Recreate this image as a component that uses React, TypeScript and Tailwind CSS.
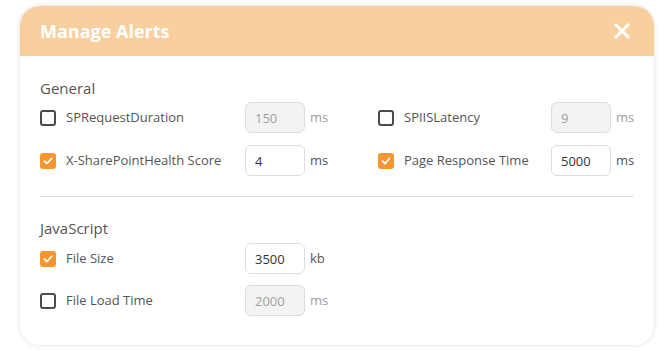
import { useState } from "react";

type Alert = {
  id: string;
  label: string;
  value: string;
  unit: string;
  checked: boolean;
};

const general: [Alert, Alert][] = [
  [
    { id: "spreq", label: "SPRequestDuration", value: "150", unit: "ms", checked: false },
    { id: "spiis", label: "SPIISLatency", value: "9", unit: "ms", checked: false },
  ],
  [
    { id: "health", label: "X-SharePointHealth Score", value: "4", unit: "ms", checked: true },
    { id: "page", label: "Page Response Time", value: "5000", unit: "ms", checked: true },
  ],
];

const javascript: Alert[] = [
  { id: "size", label: "File Size", value: "3500", unit: "kb", checked: true },
  { id: "load", label: "File Load Time", value: "2000", unit: "ms", checked: false },
];

function Check({ checked, onClick }: { checked: boolean; onClick: () => void }) {
  return (
    <button
      onClick={onClick}
      className={
        checked
          ? "w-4 h-4 shrink-0 rounded-[3px] bg-[#f7952f] flex items-center justify-center"
          : "w-4 h-4 shrink-0 rounded-[3px] border-2 border-[#4a4a4a] bg-white"
      }
    >
      {checked && (
        <svg width="10" height="10" viewBox="0 0 10 10">
          <path d="M1.5 5.2 L4 7.5 L8.5 2.5" stroke="#fff" strokeWidth="1.8" fill="none" strokeLinecap="round" strokeLinejoin="round" />
        </svg>
      )}
    </button>
  );
}

function Row({
  alert,
  labelWidth,
  onToggle,
}: {
  alert: Alert;
  labelWidth: string;
  onToggle: () => void;
}) {
  return (
    <div className="flex items-center h-[31px]">
      <Check checked={alert.checked} onClick={onToggle} />
      <span className={`ml-[10px] text-[13px] text-[#555] ${labelWidth}`}>{alert.label}</span>
      <input
        defaultValue={alert.value}
        disabled={!alert.checked}
        className={
          alert.checked
            ? "w-[60px] h-[31px] rounded-md border border-[#dcdcdc] bg-white px-[9px] text-[13px] text-[#333] outline-none"
            : "w-[60px] h-[31px] rounded-md border border-[#dcdcdc] bg-[#f3f3f3] px-[9px] text-[13px] text-[#a0a0a0] outline-none"
        }
      />
      <span className={alert.checked ? "ml-[5px] text-[13px] text-[#555]" : "ml-[5px] text-[13px] text-[#a0a0a0]"}>
        {alert.unit}
      </span>
    </div>
  );
}

export default function App() {
  const [state, setState] = useState<Record<string, boolean>>({});
  const isOn = (a: Alert) => (a.id in state ? state[a.id] : a.checked);
  const toggle = (a: Alert) => setState({ ...state, [a.id]: !isOn(a) });

  return (
    <div className="w-[668px] h-[351px] bg-white pt-[6px] pl-[20px]" style={{ fontFamily: '"Open Sans", "Noto Sans", sans-serif' }}>
      <div className="w-[634px] h-[339px] rounded-[20px] bg-white overflow-hidden shadow-[0_0_5px_rgba(0,0,0,0.13)]">
        <div className="h-[50px] bg-[#f9cf9e] flex items-center justify-between pl-5 pr-[24px]">
          <h1 className="text-[18px] font-bold text-white">Manage Alerts</h1>
          <svg width="16" height="16" viewBox="0 0 16 16" className="cursor-pointer">
            <path d="M2 2 L14 14 M14 2 L2 14" stroke="#fff" strokeWidth="3" strokeLinecap="square" />
          </svg>
        </div>
        <div className="px-5 pt-[22px]">
          <p className="text-[15px] leading-5 text-[#555]">General</p>
          <div className="mt-1 flex flex-col gap-[12px]">
            {general.map(([l, r]) => (
              <div key={l.id} className="grid grid-cols-[338px_1fr]">
                <Row alert={{ ...l, checked: isOn(l) }} labelWidth="w-[179px]" onToggle={() => toggle(l)} />
                <Row alert={{ ...r, checked: isOn(r) }} labelWidth="w-[147px]" onToggle={() => toggle(r)} />
              </div>
            ))}
          </div>
          <div className="mt-5 h-px bg-[#dedede]" />
          <p className="mt-[21px] text-[15px] leading-5 text-[#555]">JavaScript</p>
          <div className="mt-[5px] flex flex-col gap-[11px]">
            {javascript.map((a) => (
              <Row key={a.id} alert={{ ...a, checked: isOn(a) }} labelWidth="w-[179px]" onToggle={() => toggle(a)} />
            ))}
          </div>
        </div>
      </div>
    </div>
  );
}
